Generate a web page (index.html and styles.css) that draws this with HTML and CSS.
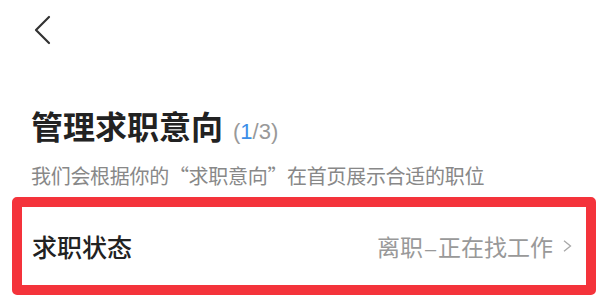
FILE: index.html
```html
<!DOCTYPE html>
<html lang="zh-CN">
<head>
  <meta charset="UTF-8" />
  <meta name="viewport" content="width=device-width, initial-scale=1.0"/>
  <title>管理求职意向</title>
  <link rel="stylesheet" href="styles.css">
</head>
<body>
<div class="page">
  <div class="nav">
    <a class="back" href="#">
      <svg width="20" height="30" viewBox="0 0 20 30">
        <polyline points="15,2 2,15 15,28" fill="none" stroke="#333" stroke-width="2.2" stroke-linecap="round" stroke-linejoin="round"/>
      </svg>
    </a>
  </div>

  <div class="intro">
    <h1 class="title">管理求职意向<span class="count">(<span class="current">1</span>/3)</span></h1>
    <p class="desc">我们会根据你的“求职意向”在首页展示合适的职位</p>
  </div>

  <div class="status-box">
    <div class="status-row">
      <span class="label">求职状态</span>
      <span class="value">
        <span class="value-text">离职<span class="dash">–</span>正在找工作</span>
        <svg class="arrow" width="10" height="12" viewBox="0 0 10 12">
          <polyline points="2,0.8 8.5,6 2,11.2" fill="none" stroke="#a8a8a8" stroke-width="1.3"/>
        </svg>
      </span>
    </div>
  </div>
</div>
</body>
</html>
```

FILE: styles.css
```css
body {
  margin: 0;
  background: #fff;
  font-family: "Noto Sans CJK SC", "Noto Sans", sans-serif;
  color: #222;
}

.page {
  width: 600px;
  height: 308px;
  overflow: hidden;
}

.nav {
  height: 60px;
  padding: 15px 0 0 34px;
  box-sizing: border-box;
}

.back {
  display: inline-block;
}

.intro {
  padding: 0 0 0 31px;
  margin-top: 45px;
}

.title {
  margin: 0;
  font-size: 32px;
  line-height: 40px;
  font-weight: 700;
  color: #222;
}

.count {
  font-size: 22px;
  font-weight: 400;
  color: #999;
  font-family: "Liberation Sans", sans-serif;
  margin-left: 10px;
}

.current {
  color: #3b8ee8;
}

.desc {
  margin: 10px 0 0;
  font-size: 20px;
  line-height: 28px;
  letter-spacing: -0.3px;
  color: #888;
}

.status-box {
  margin: 7px 0 0 12px;
  width: 584px;
  height: 98px;
  box-sizing: border-box;
  border: 10px solid #f4333b;
  border-radius: 5px;
  display: flex;
  align-items: center;
}

.status-row {
  flex: 1;
  display: flex;
  justify-content: space-between;
  align-items: center;
  padding: 0 14px 0 10px;
}

.label {
  font-size: 25px;
  font-weight: 500;
  color: #222;
}

.value {
  font-size: 23px;
  color: #999;
  display: flex;
  align-items: center;
  gap: 9px;
}

.dash {
  font-family: "Liberation Sans", sans-serif;
  font-size: 20px;
  margin: 0 2px;
}
```
